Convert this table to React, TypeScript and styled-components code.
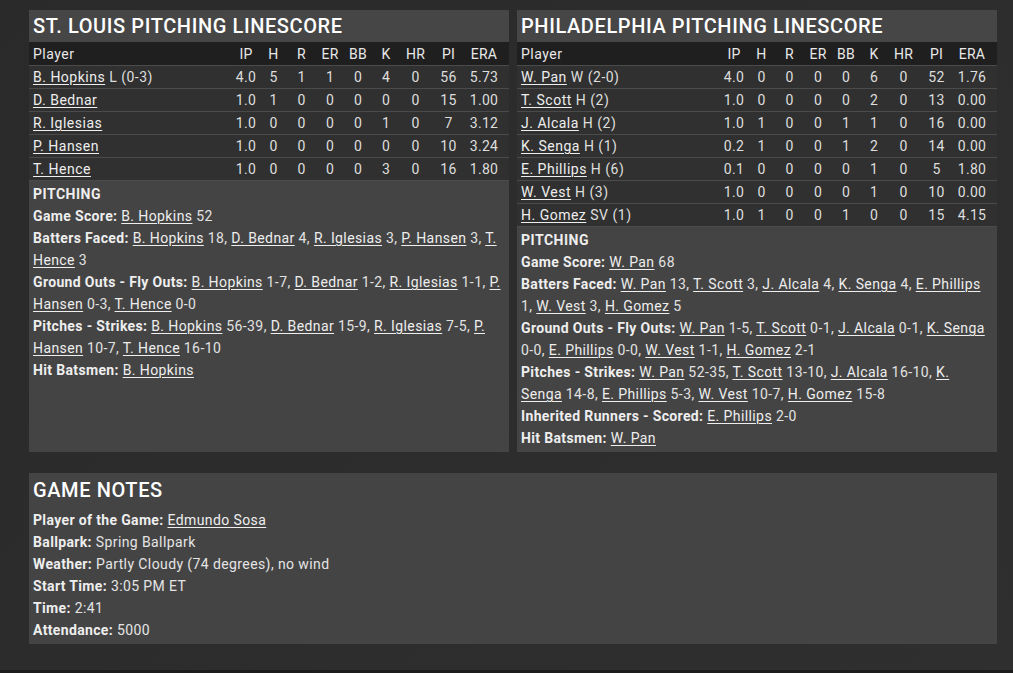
import React from "react";
import styled, { createGlobalStyle } from "styled-components";

const GlobalStyle = createGlobalStyle`
  html, body { margin: 0; padding: 0; background: #1c1c1c; }
  body { font-family: Roboto, "Liberation Sans", Arial, sans-serif; color: #e4e4e4; letter-spacing: 0.45px; }
`;

const Page = styled.div`
  height: 670px;
  box-sizing: border-box;
  padding: 10px 16px 0 29px;
  background: linear-gradient(135deg, #2a2a2a 0%, #2d2d2d 60%, #2f2f2f 100%);
  display: flex;
  flex-direction: column;
  gap: 21px;
`;

const TopRow = styled.div`
  display: grid;
  grid-template-columns: 480px 480px;
  gap: 8px;
  align-items: stretch;
`;

const Panel = styled.section`
  background: #444444;
  display: flex;
  flex-direction: column;
`;

const TitleBar = styled.h2`
  margin: 0;
  height: 32px;
  padding: 0 4px;
  display: flex;
  align-items: center;
  font-size: 20px;
  font-weight: 500;
  color: #ffffff;
  background: #464646;
  letter-spacing: 0.6px;
`;

const cols = "203px 28px 27px 29px 28px 28px 28px 31px 35px 36px 7px";

const HeadRow = styled.div`
  display: grid;
  grid-template-columns: ${cols};
  height: 23px;
  align-items: center;
  background: #1f1f1f;
  font-size: 14px;
  color: #e8e8e8;
`;

const Row = styled.div`
  display: grid;
  grid-template-columns: ${cols};
  height: 22px;
  align-items: center;
  background: #303030;
  border-top: 1px solid #4b4b4b;
  font-size: 14px;
  color: #dedede;
`;

const NameCell = styled.div`
  padding-left: 4px;
  white-space: nowrap;
  letter-spacing: 0.5px;
`;

const NumCell = styled.div`
  text-align: center;
  white-space: nowrap;
  letter-spacing: 0.3px;
`;

const Link = styled.span`
  text-decoration: underline;
  text-underline-offset: 2px;
  text-decoration-thickness: 1px;
  color: #eeeeee;
`;

const Notes = styled.div`
  flex: 1;
  background: #444444;
  border-top: 1px solid #4b4b4b;
  padding: 2px 5px 3px 4px;
  font-size: 14px;
  line-height: 22px;
  color: #e2e2e2;
  letter-spacing: 0.4px;
`;

const NoteTitle = styled.div`
  font-weight: 700;
  color: #eeeeee;
  letter-spacing: 0.5px;
`;

const Line = styled.div``;

const Label = styled.b`
  font-weight: 700;
  color: #eeeeee;
  letter-spacing: 0.35px;
`;

const GameNotes = styled.section`
  background: #444444;
  width: 968px;
  padding: 3px 4px 3px;
  box-sizing: border-box;
  font-size: 14px;
  line-height: 22px;
  letter-spacing: 0.4px;
`;

const NotesTitle = styled.h2`
  margin: 0 0 5px;
  font-size: 20px;
  font-weight: 500;
  line-height: 28px;
  color: #ffffff;
  letter-spacing: 0.6px;
`;

type Pitcher = { name: string; dec: string; s: string[] };

const stl: Pitcher[] = [
  { name: "B. Hopkins", dec: "L (0-3)", s: ["4.0", "5", "1", "1", "0", "4", "0", "56", "5.73"] },
  { name: "D. Bednar", dec: "", s: ["1.0", "1", "0", "0", "0", "0", "0", "15", "1.00"] },
  { name: "R. Iglesias", dec: "", s: ["1.0", "0", "0", "0", "0", "1", "0", "7", "3.12"] },
  { name: "P. Hansen", dec: "", s: ["1.0", "0", "0", "0", "0", "0", "0", "10", "3.24"] },
  { name: "T. Hence", dec: "", s: ["1.0", "0", "0", "0", "0", "3", "0", "16", "1.80"] },
];

const phi: Pitcher[] = [
  { name: "W. Pan", dec: "W (2-0)", s: ["4.0", "0", "0", "0", "0", "6", "0", "52", "1.76"] },
  { name: "T. Scott", dec: "H (2)", s: ["1.0", "0", "0", "0", "0", "2", "0", "13", "0.00"] },
  { name: "J. Alcala", dec: "H (2)", s: ["1.0", "1", "0", "0", "1", "1", "0", "16", "0.00"] },
  { name: "K. Senga", dec: "H (1)", s: ["0.2", "1", "0", "0", "1", "2", "0", "14", "0.00"] },
  { name: "E. Phillips", dec: "H (6)", s: ["0.1", "0", "0", "0", "0", "1", "0", "5", "1.80"] },
  { name: "W. Vest", dec: "H (3)", s: ["1.0", "0", "0", "0", "0", "1", "0", "10", "0.00"] },
  { name: "H. Gomez", dec: "SV (1)", s: ["1.0", "1", "0", "0", "1", "0", "0", "15", "4.15"] },
];

const heads = ["IP", "H", "R", "ER", "BB", "K", "HR", "PI", "ERA"];

type Entry = [string, string];

const List: React.FC<{ items: Entry[] }> = ({ items }) => (
  <>
    {items.map(([n, v], i) => (
      <React.Fragment key={i}>
        <Link>{n}</Link>
        {v ? ` ${v}` : ""}
        {i < items.length - 1 ? ", " : ""}
      </React.Fragment>
    ))}
  </>
);

const Linescore: React.FC<{ title: string; data: Pitcher[]; notes: [string, Entry[]][] }> = ({
  title,
  data,
  notes,
}) => (
  <Panel>
    <TitleBar>{title}</TitleBar>
    <HeadRow>
      <NameCell>Player</NameCell>
      {heads.map((h) => (
        <NumCell key={h}>{h}</NumCell>
      ))}
      <span />
    </HeadRow>
    {data.map((p) => (
      <Row key={p.name}>
        <NameCell>
          <Link>{p.name}</Link>
          {p.dec ? ` ${p.dec}` : ""}
        </NameCell>
        {p.s.map((v, i) => (
          <NumCell key={i}>{v}</NumCell>
        ))}
        <span />
      </Row>
    ))}
    <Notes>
      <NoteTitle>PITCHING</NoteTitle>
      {notes.map(([label, items]) => (
        <Line key={label}>
          <Label>{label}:</Label> <List items={items} />
        </Line>
      ))}
    </Notes>
  </Panel>
);

const stlNotes: [string, Entry[]][] = [
  ["Game Score", [["B. Hopkins", "52"]]],
  [
    "Batters Faced",
    [
      ["B. Hopkins", "18"],
      ["D. Bednar", "4"],
      ["R. Iglesias", "3"],
      ["P. Hansen", "3"],
      ["T. Hence", "3"],
    ],
  ],
  [
    "Ground Outs - Fly Outs",
    [
      ["B. Hopkins", "1-7"],
      ["D. Bednar", "1-2"],
      ["R. Iglesias", "1-1"],
      ["P. Hansen", "0-3"],
      ["T. Hence", "0-0"],
    ],
  ],
  [
    "Pitches - Strikes",
    [
      ["B. Hopkins", "56-39"],
      ["D. Bednar", "15-9"],
      ["R. Iglesias", "7-5"],
      ["P. Hansen", "10-7"],
      ["T. Hence", "16-10"],
    ],
  ],
  ["Hit Batsmen", [["B. Hopkins", ""]]],
];

const phiNotes: [string, Entry[]][] = [
  ["Game Score", [["W. Pan", "68"]]],
  [
    "Batters Faced",
    [
      ["W. Pan", "13"],
      ["T. Scott", "3"],
      ["J. Alcala", "4"],
      ["K. Senga", "4"],
      ["E. Phillips", "1"],
      ["W. Vest", "3"],
      ["H. Gomez", "5"],
    ],
  ],
  [
    "Ground Outs - Fly Outs",
    [
      ["W. Pan", "1-5"],
      ["T. Scott", "0-1"],
      ["J. Alcala", "0-1"],
      ["K. Senga", "0-0"],
      ["E. Phillips", "0-0"],
      ["W. Vest", "1-1"],
      ["H. Gomez", "2-1"],
    ],
  ],
  [
    "Pitches - Strikes",
    [
      ["W. Pan", "52-35"],
      ["T. Scott", "13-10"],
      ["J. Alcala", "16-10"],
      ["K. Senga", "14-8"],
      ["E. Phillips", "5-3"],
      ["W. Vest", "10-7"],
      ["H. Gomez", "15-8"],
    ],
  ],
  ["Inherited Runners - Scored", [["E. Phillips", "2-0"]]],
  ["Hit Batsmen", [["W. Pan", ""]]],
];

export default function App() {
  return (
    <>
      <GlobalStyle />
      <Page>
        <TopRow>
          <Linescore title="ST. LOUIS PITCHING LINESCORE" data={stl} notes={stlNotes} />
          <Linescore title="PHILADELPHIA PITCHING LINESCORE" data={phi} notes={phiNotes} />
        </TopRow>
        <GameNotes>
          <NotesTitle>GAME NOTES</NotesTitle>
          <Line>
            <Label>Player of the Game:</Label> <Link>Edmundo Sosa</Link>
          </Line>
          <Line>
            <Label>Ballpark:</Label> Spring Ballpark
          </Line>
          <Line>
            <Label>Weather:</Label> Partly Cloudy (74 degrees), no wind
          </Line>
          <Line>
            <Label>Start Time:</Label> 3:05 PM ET
          </Line>
          <Line>
            <Label>Time:</Label> 2:41
          </Line>
          <Line>
            <Label>Attendance:</Label> 5000
          </Line>
        </GameNotes>
      </Page>
    </>
  );
}
